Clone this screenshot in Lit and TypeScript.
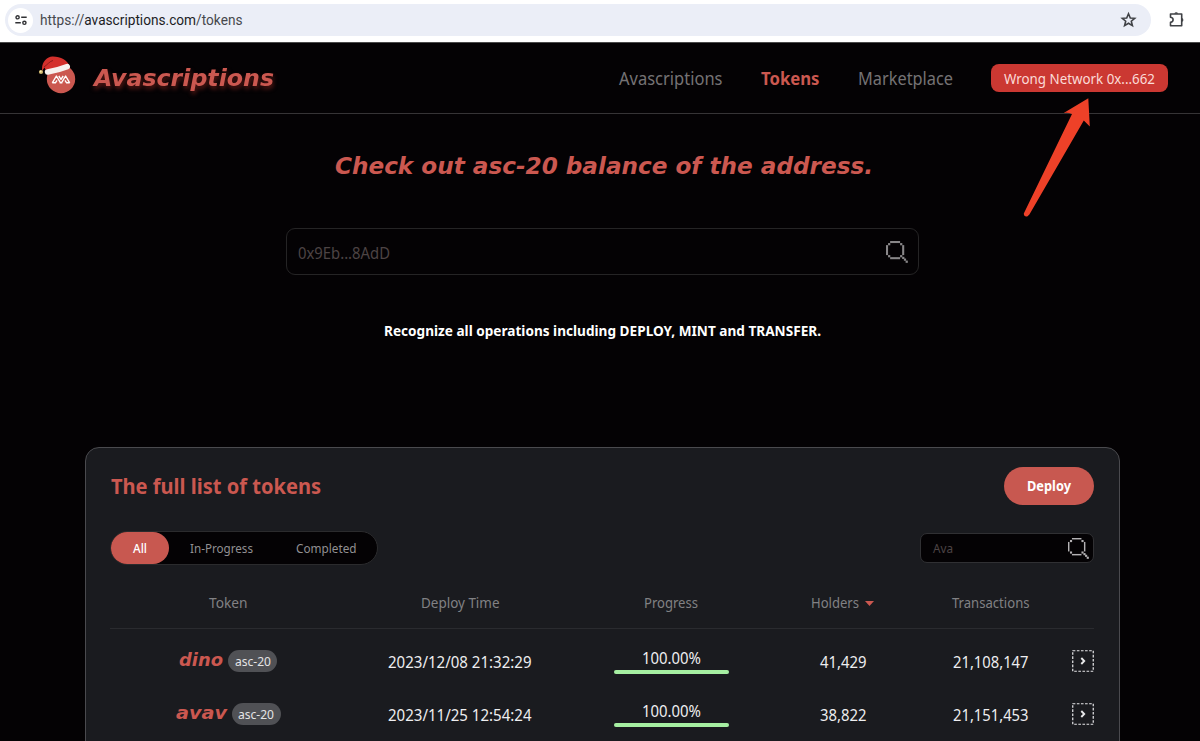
import { LitElement, html, css, svg } from "lit";
import { customElement } from "lit/decorators.js";

/** One line of text set to an exact advance width; `base` is the baseline inside a 20px line box. */
const line = (text: string, width: number, cls: string, base = 15) => html`
  <svg class="line ${cls}" width=${width} height="20">
    <text x="0" y=${base} textLength=${width} lengthAdjust="spacingAndGlyphs">${text}</text>
  </svg>`;

const magnifier = (size: number, px: number) => {
  const squares = [
    [7, 7], [42, 7], [7, 42], [42, 42], [48, 47], [53, 52], [58, 58],
  ];
  return html`<svg class="mag" width=${size} height=${size} viewBox="0 0 64 64">
    <rect x="12" y="0" width="29" height=${px}></rect>
    <rect x="12" y=${53 - px} width="29" height=${px}></rect>
    <rect x="0" y="12" width=${px} height="29"></rect>
    <rect x=${53 - px} y="12" width=${px} height="29"></rect>
    ${squares.map(([x, y]) => svg`<rect x=${x - 1} y=${y - 1} width="6.5" height="6.5"></rect>`)}
  </svg>`;
};

interface Token {
  name: string; nameWidth: number; time: string; progress: number; holders: string; tx: string;
}

const TOKENS: Token[] = [
  { name: "dino", nameWidth: 44, time: "2023/12/08 21:32:29", progress: 100, holders: "41,429", tx: "21,108,147" },
  { name: "avav", nameWidth: 51, time: "2023/11/25 12:54:24", progress: 100, holders: "38,822", tx: "21,151,453" },
];

@customElement("app-root")
export class AppRoot extends LitElement {
  static styles = css`
    :host { display: block; position: relative; width: 1200px; height: 741px; overflow: hidden;
      background: #040204; font-family: "Noto Sans", "Open Sans", sans-serif; }
    * { box-sizing: border-box; }
    svg { display: block; flex: none; overflow: visible; }
    .line { fill: #fff; font-size: 14px; }
    .browser { height: 43px; background: #fff; border-bottom: 1px solid #4a4a4a; display: flex; padding: 4px 0 0 5px; }
    .url { width: 1146px; height: 32px; border-radius: 16px; background: #ebeef7; display: flex; align-items: center; padding: 0 14px 0 3px; }
    .site { width: 25px; height: 25px; border-radius: 50%; background: #fff; display: grid; place-items: center; margin-right: 7px; }
    .address { fill: #46484c; font: 13.8px Roboto, sans-serif; }
    .address .host { fill: #1b1c1f; }
    .star { margin-left: auto; }
    .puzzle { margin: 7px 0 0 17px; }
    header { height: 71px; border-bottom: 1px solid #363436; display: flex; align-items: center; padding: 0 32px 0 38px; }
    .logo { margin-top: -4px; }
    .brand { margin-left: 18px; fill: #cb5850; font: italic 700 23px "DejaVu Sans", sans-serif; filter: drop-shadow(1px 3px 2px #561814); }
    nav { margin-left: auto; display: flex; align-items: center; }
    .nav { fill: #757274; font-size: 17.5px; margin-right: 38.5px; }
    .nav.on { fill: #cb5850; font-weight: 700; }
    .wallet { width: 177px; height: 28px; border-radius: 8px; background: #cb3832; display: grid; place-items: center; }
    .wallet .line { fill: #fbdcd8; font-size: 13.8px; }
    main { display: flex; flex-direction: column; align-items: center; }
    .title { fill: #cb5850; font: italic 700 22.5px "DejaVu Sans", sans-serif; margin: 42px 0 0 7px; }
    .lookup { width: 633px; height: 47px; margin: 52px 0 0 4px; border: 1.5px solid #252425; border-radius: 9px;
      display: flex; align-items: center; justify-content: space-between; padding: 0 10px 0 11px; }
    .hint { fill: #4d4444; font-size: 15.8px; }
    .lookup .mag { fill: #898789; }
    .note { font-size: 13.4px; font-weight: 700; margin: 46px 0 0 5px; }
    .panel { width: 1035px; height: 310px; margin: 106px 0 0 5px; border: 1px solid #4a4a4e; border-radius: 14px;
      background: #1a1b1f; padding: 19px 25px 0 24px; }
    .top, .tools { display: flex; justify-content: space-between; align-items: center; }
    .heading { fill: #cb5850; font-size: 20.5px; font-weight: 700; margin-left: .5px; }
    .deploy { width: 90px; height: 38px; border-radius: 19px; background: #c85850; display: grid; place-items: center; }
    .deploy .line { font-weight: 700; font-size: 13.3px; }
    .tools { margin-top: 26px; height: 34px; }
    .tabs { width: 268px; height: 34px; border: 1px solid #2b2b2d; border-radius: 17px; background: #040204; display: flex; align-items: center; }
    .all { flex: none; width: 58px; height: 32px; border-radius: 16px; background: #c85850; display: grid; place-items: center; margin-right: 20.5px; }
    .all .line { font-size: 12.4px; font-weight: 500; }
    .tab { fill: #929092; font-size: 12.4px; margin-right: 43.5px; }
    .filter { width: 174px; height: 30px; border: 1px solid #303033; border-radius: 7px; background: #040204;
      display: flex; align-items: center; justify-content: space-between; padding: 0 4px 0 12px; }
    .filter .hint { font-size: 12px; }
    .filter .mag { fill: #b4b2b4; }
    .row { display: grid; grid-template-columns: 236px 228px 194px 150px 145px 31px; align-items: center; justify-items: center; height: 53px; }
    .row.head { height: 64px; border-bottom: 1px solid #2a2b2f; padding-top: 13px; }
    .head .line { fill: #818184; font-size: 14.2px; }
    .body { padding-top: 6px; }
    .cell { display: flex; align-items: center; gap: 6px; margin-right: 2px; }
    .token { display: flex; align-items: center; gap: 5px; }
    .name { fill: #cb5850; font: italic 700 18.5px "DejaVu Sans", sans-serif; }
    .badge { width: 49px; height: 22px; border-radius: 11px; background: #505155; display: grid; place-items: center; margin-top: -1px; }
    .badge .line { fill: #e4e4e6; font-size: 12.5px; }
    .value { fill: #eeeef0; font-size: 15.8px; }
    .progress { width: 115px; display: flex; flex-direction: column; align-items: center; margin-top: -1px; }
    .track { width: 100%; height: 4px; border-radius: 2px; background: #333; margin-top: 1px; }
    .fill { height: 4px; border-radius: 2px; background: #a6efa2; }
    .open { justify-self: end; margin-top: -1px; }
    .arrow { position: absolute; left: 1020px; top: 96px; }
  `;

  private logo() {
    return html`<svg class="logo" width="38" height="40" viewBox="38 56 38 40">
      <circle cx="61" cy="79" r="14.2" fill="#cb5850"></circle>
      <path d="M42 69C42 61 48 56 53 56.5C61 57 67 60 69 65L46 71L44.5 67.5L42 71Z" fill="#d4302c"></path>
      <path d="M44 67C47 65 50 61 53 60.5" fill="none" stroke="#7d1717" stroke-width=".8"></path>
      <path d="M47.6 72Q58 70.2 67.2 66.6" fill="none" stroke="#f7f1ee" stroke-width="5.6" stroke-linecap="round"></path>
      <circle cx="41" cy="72" r="2.1" fill="#cfb66e"></circle>
      <circle cx="40.6" cy="71.5" r=".9" fill="#fff0b0"></circle>
      <path d="M52.3 82.8L56.4 76L60.4 82.6M69.7 82.8L65.6 76L61.6 82.6M52.3 82.8H55.4L57 80.4M69.7 82.8H66.6L65 80.4M58.8 76L61 79.4L63.2 76M59.6 82.8H62.4" fill="none" stroke="#fff" stroke-width="1.4" stroke-linejoin="round"></path>
    </svg>`;
  }

  private row(t: Token) {
    return html`<div class="row">
      <div class="token">
        ${line(t.name, t.nameWidth, "name", 13.8)}
        <div class="badge">${line("asc-20", 36, "", 15)}</div>
      </div>
      ${line(t.time, 143.5, "value", 16.3)}
      <div class="progress">
        ${line(t.progress.toFixed(2) + "%", 59, "value", 15.3)}
        <div class="track"><div class="fill" style="width:${t.progress}%"></div></div>
      </div>
      ${line(t.holders, 46.5, "value", 16.3)}
      ${line(t.tx, 75.5, "value", 16.3)}
      <svg class="open" width="22" height="22" fill="none" stroke="#e8e8ea">
        <rect x=".75" y=".75" width="20.5" height="20.5" stroke-width="1.2" stroke-dasharray="2.6 1.5"></rect>
        <path d="M9.3 8L12.2 11L9.3 14" stroke-width="1.9"></path>
      </svg>
    </div>`;
  }

  render() {
    return html`
      <div class="browser">
        <div class="url">
          <div class="site"><svg width="12" height="10" fill="none" stroke="#303134" stroke-width="1.4">
            <circle cx="2.6" cy="2.3" r="1.6"></circle><path d="M6.2 2.3H11.7M.3 7.8H5.8"></path><circle cx="9.4" cy="7.8" r="1.6"></circle>
          </svg></div>
          <svg class="address" width="203" height="20"><text x="0" y="14.8" textLength="202.5" lengthAdjust="spacingAndGlyphs">https://<tspan class="host">avascriptions.com</tspan>/tokens</text></svg>
          <svg class="star" width="16" height="16" fill="none" stroke="#404246" stroke-width="1.6"><path d="M7.5 1.8L9.3 6L13.7 6.3L10.3 9.2L11.4 13.6L7.5 11.2L3.6 13.6L4.7 9.2L1.3 6.3L5.7 6Z"></path></svg>
        </div>
        <svg class="puzzle" width="17" height="17"><path d="M2.5 3H13.7V14.8H2.5V11.4Q5.1 11 5.1 8.8Q5.1 6.6 2.5 6.2Z" fill="none" stroke="#404246" stroke-width="1.6" stroke-linejoin="round"></path><path d="M6.3 2.7A2 2 0 0 1 10.1 2.7ZM14 7A2 2 0 0 1 14 10.8Z" fill="#404246"></path></svg>
      </div>
      <header>
        ${this.logo()}
        ${line("Avascriptions", 180, "brand", 18)}
        <nav>
          ${line("Avascriptions", 103.5, "nav", 16.7)}
          ${line("Tokens", 58.5, "nav on", 16.8)}
          ${line("Marketplace", 95, "nav", 16.7)}
          <div class="wallet">${line("Wrong Network 0x...662", 151, "", 15.6)}</div>
        </nav>
      </header>
      <main>
        ${line("Check out asc-20 balance of the address.", 538, "title", 18)}
        <div class="lookup">${line("0x9Eb...8AdD", 92, "hint", 17)}${magnifier(22, 6)}</div>
        ${line("Recognize all operations including DEPLOY, MINT and TRANSFER.", 437, "note", 15)}
        <section class="panel">
          <div class="top">
            ${line("The full list of tokens", 210, "heading", 17.6)}
            <div class="deploy">${line("Deploy", 44, "", 15)}</div>
          </div>
          <div class="tools">
            <div class="tabs">
              <div class="all">${line("All", 14, "", 15)}</div>
              ${line("In-Progress", 63, "tab", 15)}${line("Completed", 60.5, "tab", 15)}
            </div>
            <div class="filter">${line("Ava", 20, "hint", 15)}${magnifier(21, 4.4)}</div>
          </div>
          <div class="row head">
            ${line("Token", 38.5, "")}${line("Deploy Time", 78.5, "")}${line("Progress", 54, "")}
            <div class="cell">${line("Holders", 48, "")}<svg width="9" height="5"><path d="M0 0H9L4.5 5Z" fill="#cb5850"></path></svg></div>
            ${line("Transactions", 77.5, "")}
          </div>
          <div class="body">${TOKENS.map((t) => this.row(t))}</div>
        </section>
      </main>
      <svg class="arrow" width="72" height="122" viewBox="1020 96 72 122">
        <path d="M1088.3 98.2L1063.7 113Q1068 112.3 1072 113.9L1023.8 213.5Q1023.8 217 1027.2 216.5L1029.4 214.6L1083.8 120.6L1089.8 126.4Z" fill="#ee4128"></path>
      </svg>`;
  }
}
